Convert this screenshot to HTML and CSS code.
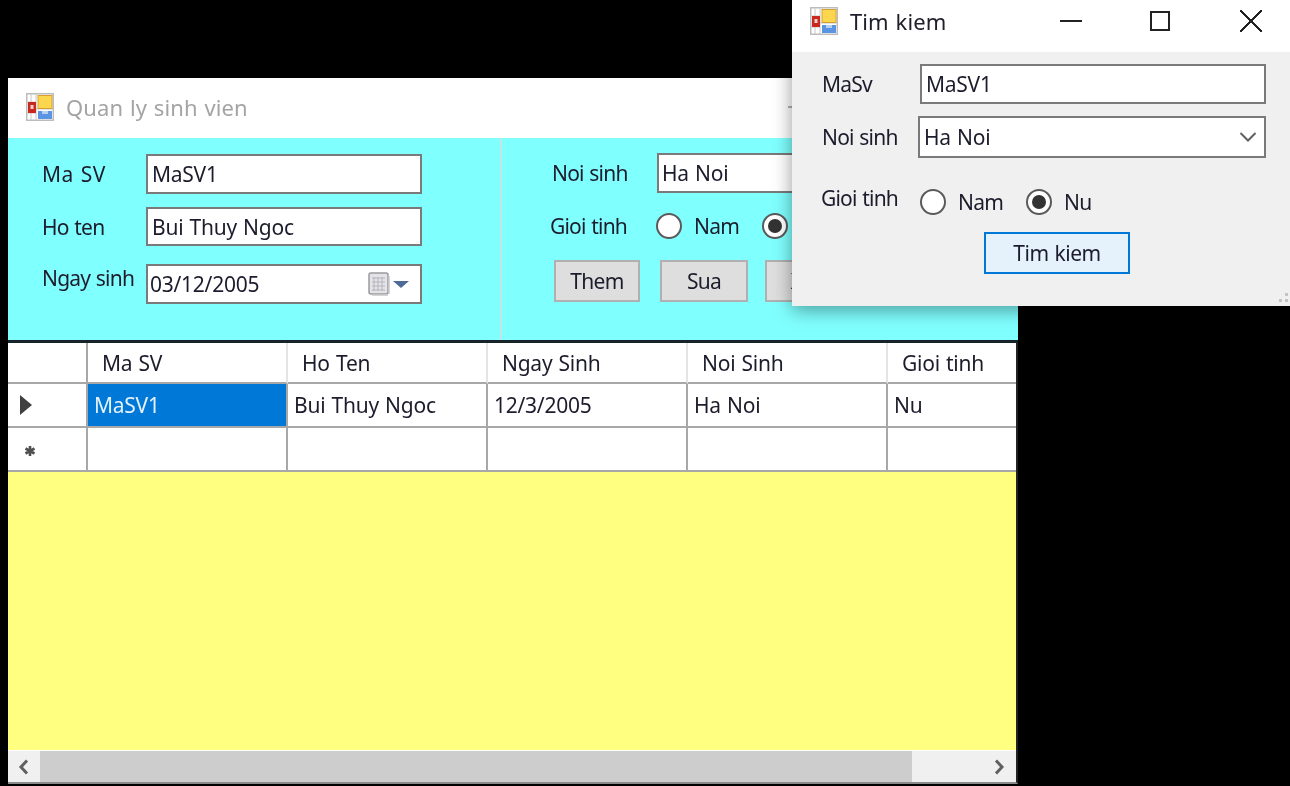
FILE: index.html
```html
<!DOCTYPE html>
<html lang="en">
<head>
  <meta charset="UTF-8">
  <title>Quan ly sinh vien</title>
  <link rel="stylesheet" href="styles.css">
</head>
<body>
  <svg class="defs" width="0" height="0">
    <symbol id="form-icon" viewBox="0 0 28 28">
      <rect x="0.750" y="0.750" width="26.500" height="26.500" fill="#fff" stroke="#bcbcbc" stroke-width="1.500"/>
      <path d="M1 9H10M5 1V9M1 20H10M5 20V27M10 1V27M10 16H27" stroke="#c8c8c8" fill="none"/>
      <rect x="2" y="9" width="8" height="11" fill="#c8281e"/>
      <rect x="4.500" y="12" width="3" height="4" fill="#f4d0c8"/>
      <rect x="12" y="2.500" width="14" height="13" fill="#fcd64e" stroke="#d8a030"/>
      <rect x="12" y="18" width="14" height="8" fill="#5c94e4"/>
      <rect x="16" y="18" width="6" height="3" fill="#b8d0f0"/>
    </symbol>
  </svg>

  <div class="desktop">
    <div class="window main-window">
      <div class="titlebar main-titlebar">
        <svg class="app-icon"><use href="#form-icon"/></svg>
        <span class="title title-inactive">Quan ly sinh vien</span>
        <div class="caption-btns caption-inactive">
          <span class="cap-min"></span>
          <span class="cap-max"></span>
          <span class="cap-close"></span>
        </div>
      </div>

      <div class="form-panel">
        <div class="pane pane-left">
          <div class="field row-sv">
            <span class="lbl lbl-left lbl-wide">Ma SV</span>
            <div class="box box-left">MaSV1</div>
          </div>
          <div class="field row-ten">
            <span class="lbl lbl-left">Ho ten</span>
            <div class="box box-left box-ten">Bui Thuy Ngoc</div>
          </div>
          <div class="field row-ngay">
            <span class="lbl lbl-left lbl-up">Ngay sinh</span>
            <div class="box box-left box-date">
              <span>03/12/2005</span>
              <svg class="cal-icon" viewBox="0 0 42 24" width="42" height="24">
                <rect x="1" y="1" width="19" height="21" rx="2" fill="#e4e4e8" stroke="#9a9a9e" stroke-width="1.500"/>
                <path d="M20 23H4M21 4V22" stroke="#c8c8c8" stroke-width="1.500"/>
                <path d="M4 6H17M4 10H17M4 14H17M4 18H17M6 5V19M10 5V19M14 5V19" stroke="#b4b4bc"/>
                <path d="M25 9H41L33 16Z" fill="#4f6a96"/>
              </svg>
            </div>
          </div>
        </div>
        <div class="pane pane-right">
          <div class="field row-noi">
            <span class="lbl lbl-noi">Noi sinh</span>
            <div class="box box-noi">Ha Noi</div>
          </div>
          <div class="field row-gt">
            <span class="lbl lbl-gt">Gioi tinh</span>
            <span class="radio"></span><span class="radio-text">Nam</span>
            <span class="radio radio-on"></span><span class="radio-text">Nu</span>
          </div>
          <div class="btn-row">
            <div class="btn">Them</div>
            <div class="btn btn-sua">Sua</div>
            <div class="btn btn-xoa">Xoa</div>
          </div>
        </div>
      </div>

      <div class="data-view">
        <div class="grid">
          <div class="cell head"></div>
          <div class="cell head">Ma SV</div>
          <div class="cell head">Ho Ten</div>
          <div class="cell head">Ngay Sinh</div>
          <div class="cell head">Noi Sinh</div>
          <div class="cell head">Gioi tinh</div>

          <div class="cell rowhead"><svg width="12" height="20" viewBox="0 0 12 20"><path d="M0 0L12 10L0 20Z" fill="#404040"/></svg></div>
          <div class="cell selected">MaSV1</div>
          <div class="cell">Bui Thuy Ngoc</div>
          <div class="cell">12/3/2005</div>
          <div class="cell">Ha Noi</div>
          <div class="cell">Nu</div>

          <div class="cell rowhead"><svg class="new-mark" width="12" height="12" viewBox="0 0 12 12"><path d="M6 1V11M1.500 3.500L10.500 8.500M10.500 3.500L1.500 8.500" stroke="#505050" stroke-width="2.600"/></svg></div>
          <div class="cell"></div>
          <div class="cell"></div>
          <div class="cell"></div>
          <div class="cell"></div>
          <div class="cell"></div>
        </div>
        <div class="grid-empty"></div>
        <div class="hscroll">
          <svg class="arrow" width="14" height="16" viewBox="0 0 14 16"><path d="M10 1.500L4 8L10 14.500" fill="none" stroke="#606060" stroke-width="3"/></svg>
          <div class="thumb"></div>
          <svg class="arrow" width="14" height="16" viewBox="0 0 14 16"><path d="M4 1.500L10 8L4 14.500" fill="none" stroke="#606060" stroke-width="3"/></svg>
        </div>
      </div>
    </div>

    <div class="window search-window">
      <div class="titlebar search-titlebar">
        <svg class="app-icon"><use href="#form-icon"/></svg>
        <span class="title">Tim kiem</span>
        <div class="caption-btns">
          <span class="cap-min"></span>
          <span class="cap-max"></span>
          <span class="cap-close"></span>
        </div>
      </div>
      <div class="search-body">
        <div class="field s-row-sv">
          <span class="lbl s-lbl">MaSv</span>
          <div class="box s-box">MaSV1</div>
        </div>
        <div class="field s-row-noi">
          <span class="lbl s-lbl-noi">Noi sinh</span>
          <div class="box s-combo">
            <span>Ha Noi</span>
            <svg width="18" height="10" viewBox="0 0 18 10"><path d="M1.500 1L9 8.500L16.500 1" fill="none" stroke="#606060" stroke-width="2"/></svg>
          </div>
        </div>
        <div class="field s-row-gt">
          <span class="lbl s-lbl-gt">Gioi tinh</span>
          <span class="radio"></span><span class="radio-text">Nam</span>
          <span class="radio radio-on"></span><span class="radio-text">Nu</span>
        </div>
        <div class="s-btn">Tim kiem</div>
        <svg class="grip" width="10" height="10" viewBox="0 0 10 10"><path d="M7 0h3v3H7zM1 6h3v3H1zM7 6h3v3H7z" fill="#c4c4c4"/></svg>
      </div>
    </div>
  </div>
</body>
</html>
```

FILE: styles.css
```css
* {
  box-sizing: border-box;
}
html, body {
  margin: 0;
  padding: 0;
  background: #000;
}
.defs {
  position: absolute;
}
.desktop {
  position: relative;
  width: 1290px;
  height: 786px;
  overflow: hidden;
  background: #000;
  font-family: "Noto Sans", "Open Sans", sans-serif;
  font-size: 21px;
  letter-spacing: -0.25px;
  word-spacing: 1px;
  color: #1c1c2c;
  filter: blur(0.45px);
}
.window {
  position: absolute;
  display: flex;
  flex-direction: column;
}
.main-window {
  left: 8px;
  top: 78px;
  width: 1010px;
  height: 706px;
}
.search-window {
  left: 792px;
  top: 0;
  width: 498px;
  height: 306px;
  background: #f0f0f0;
  box-shadow: 0 4px 18px rgba(0,0,0,0.4);
}

/* title bars */
.titlebar {
  display: flex;
  align-items: center;
  height: 60px;
  flex: none;
  padding-left: 18px;
  background: #fff;
}
.main-titlebar {
  padding-bottom: 2px;
}
.search-titlebar {
  height: 52px;
  padding-bottom: 11px;
}
.app-icon {
  width: 28px;
  height: 28px;
  flex: none;
}
.title {
  margin-left: 12px;
  font-size: 22px;
  letter-spacing: 0.1px;
  color: #20202c;
}
.title-inactive {
  color: #a4a4a4;
}
.caption-btns {
  display: flex;
  margin-left: auto;
  align-items: center;
  height: 100%;
}
.caption-btns span {
  display: block;
  flex: none;
}
.cap-min {
  width: 22px;
  height: 2px;
  margin-right: 68px;
  background: #222;
}
.cap-max {
  width: 20px;
  height: 20px;
  margin-right: 70px;
  border: 2px solid #222;
}
.cap-close {
  width: 22px;
  height: 22px;
  margin-right: 28px;
  background:
    linear-gradient(45deg, transparent 46%, #222 46%, #222 54%, transparent 54%),
    linear-gradient(-45deg, transparent 46%, #222 46%, #222 54%, transparent 54%);
}
.caption-inactive .cap-min {
  background: #b0b0b0;
}
.caption-inactive .cap-max {
  border-color: #b0b0b0;
}

/* top form */
.form-panel {
  display: flex;
  height: 202px;
  flex: none;
  background: #80ffff;
}
.pane-left {
  width: 492px;
  padding: 16px 0 0 34px;
}
.pane-right {
  flex: 1;
  padding: 15px 0 0 50px;
  border-left: 2px solid #c6e4e4;
}
.field {
  display: flex;
  align-items: center;
}
.row-ten {
  margin-top: 13px;
}
.row-ngay {
  margin-top: 18px;
}
.lbl {
  flex: none;
  white-space: nowrap;
  letter-spacing: -0.8px;
}
.lbl-left {
  width: 104px;
}
.lbl-wide {
  letter-spacing: 0.5px;
}
.lbl-up {
  margin-bottom: 12px;
}
.box {
  height: 40px;
  flex: none;
  display: flex;
  align-items: center;
  padding-left: 4px;
  background: #fff;
  border: 2px solid #7a7a7a;
  white-space: nowrap;
}
.box-left {
  width: 276px;
}
.box-ten {
  height: 39px;
}
.box-date {
  justify-content: space-between;
  padding-left: 2px;
  padding-right: 10px;
}
.cal-icon {
  flex: none;
}
.lbl-noi {
  width: 105px;
}
.box-noi {
  width: 300px;
  padding-left: 3px;
}
.row-noi {
  margin-bottom: 13px;
}
.row-gt {
  height: 40px;
  margin-left: -2px;
}
.lbl-gt {
  width: 106px;
}
.radio {
  position: relative;
  flex: none;
  width: 26px;
  height: 26px;
  border-radius: 50%;
  background: #fff;
  border: 2px solid #5a5a5a;
}
.radio-on::after {
  content: "";
  position: absolute;
  left: 4px;
  top: 4px;
  width: 14px;
  height: 14px;
  border-radius: 50%;
  background: #333;
}
.radio-text {
  flex: none;
  width: 68px;
  margin-left: 12px;
  letter-spacing: -0.7px;
}
.btn-row {
  display: flex;
  gap: 20px;
  margin: 14px 0 0 2px;
}
.btn {
  width: 86px;
  height: 42px;
  display: flex;
  align-items: center;
  justify-content: center;
  letter-spacing: -0.7px;
  background: #dedede;
  border: 2px solid #b0b0b0;
}
.btn-sua {
  width: 88px;
}
.btn-xoa {
  margin-left: -3px;
}

/* data grid */
.data-view {
  flex: 1;
  display: flex;
  flex-direction: column;
  border-top: 3px solid #16242a;
  border-right: 2px solid #222;
  border-bottom: 2px solid #8a8a8a;
  background: #ffff80;
  min-height: 0;
}
.grid {
  display: grid;
  grid-template-columns: 80px 200px 200px 200px 200px 128px;
  grid-template-rows: 41px 44px 44px;
  background: #fff;
  flex: none;
}
.cell {
  display: flex;
  align-items: center;
  padding-left: 6px;
  border-right: 2px solid #a8a8a8;
  border-bottom: 2px solid #a8a8a8;
  white-space: nowrap;
}
.cell:nth-child(6n) {
  border-right: none;
}
.head {
  padding-left: 14px;
  border-right-color: #e4e4e4;
}
.head:nth-child(1) {
  border-right-color: #a8a8a8;
}
.rowhead {
  padding-left: 12px;
}
.new-mark {
  margin: 4px 0 0 4px;
}
.selected {
  background: #0078d7;
  color: #e4f0fb;
}
.grid-empty {
  flex: 1;
  min-height: 0;
}
.hscroll {
  display: flex;
  align-items: center;
  height: 32px;
  flex: none;
  background: #f0f0f0;
  border-top: 1px solid #fff;
}
.arrow {
  flex: none;
  margin: 0 9px;
}
.thumb {
  width: 872px;
  height: 100%;
  background: #cdcdcd;
  margin-right: 71px;
}

/* search dialog */
.search-body {
  position: relative;
  flex: 1;
  padding: 12px 24px 0 28px;
}
.s-lbl {
  width: 98px;
  margin-left: 2px;
}
.s-box {
  width: 346px;
}
.s-row-noi {
  margin-top: 12px;
}
.s-lbl-noi {
  width: 96px;
  margin-left: 2px;
}
.s-combo {
  width: 348px;
  height: 42px;
  justify-content: space-between;
  padding-right: 7px;
}
.s-row-gt {
  margin-top: 26px;
}
.s-lbl-gt {
  width: 99px;
  margin-left: 1px;
  margin-bottom: 8px;
}
.s-btn {
  width: 146px;
  height: 42px;
  margin: 12px 0 0 164px;
  display: flex;
  align-items: center;
  justify-content: center;
  letter-spacing: -0.5px;
  background: #e5f1fb;
  border: 2px solid #0078d7;
}
.grip {
  position: absolute;
  right: 2px;
  bottom: 3px;
}
```
